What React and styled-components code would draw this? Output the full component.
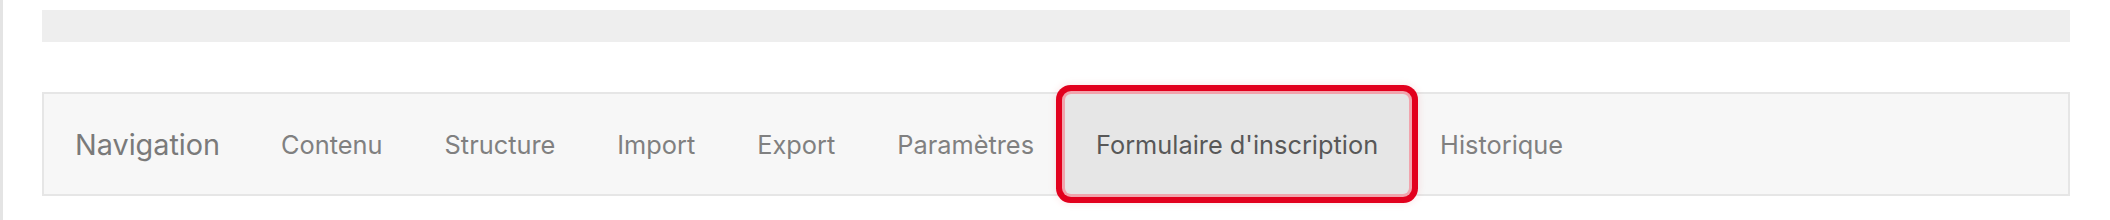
import React from 'react';
import styled, { createGlobalStyle } from 'styled-components';

const GlobalStyle = createGlobalStyle`
  html, body {
    margin: 0;
    padding: 0;
    background: #ffffff;
  }
  body {
    font-family: Inter, "Noto Sans", "Liberation Sans", sans-serif;
  }
`;

const Page = styled.div`
  box-sizing: border-box;
  min-height: 220px;
  border-left: 3px solid #e4e4e4;
  padding: 10px 40px 0 39px;
`;

const TopBar = styled.div`
  height: 32px;
  background: #eeeeee;
`;

const Navbar = styled.nav`
  box-sizing: border-box;
  display: flex;
  align-items: stretch;
  height: 104px;
  margin-top: 50px;
  border: 2px solid #e6e6e6;
  background: #f7f7f7;
`;

const Brand = styled.div`
  display: flex;
  align-items: center;
  padding: 0 30px 0 31px;
  font-size: 28.8px;
  color: #7a7a7a;
`;

const NavItem = styled.a`
  display: flex;
  align-items: center;
  padding: 0 31px;
  font-size: 25.35px;
  text-decoration: none;
  color: ${(props) => (props.$active ? '#585858' : '#808080')};
  background: ${(props) => (props.$active ? '#e6e6e6' : 'transparent')};
  border-radius: ${(props) => (props.$active ? '6px' : '0')};
  box-shadow: ${(props) =>
    props.$active
      ? '0 0 0 3px #f1a4ad, 0 0 0 9px #e2001d, 0 0 8px 9px rgba(226, 0, 29, 0.12)'
      : 'none'};
  position: relative;
`;

const items = [
  'Contenu',
  'Structure',
  'Import',
  'Export',
  'Paramètres',
  "Formulaire d'inscription",
  'Historique',
];

const App = () => (
  <>
    <GlobalStyle />
    <Page>
      <TopBar />
      <Navbar>
        <Brand>Navigation</Brand>
        {items.map((label) => (
          <NavItem
            key={label}
            href="#"
            $active={label === "Formulaire d'inscription"}
          >
            {label}
          </NavItem>
        ))}
      </Navbar>
    </Page>
  </>
);

export default App;
